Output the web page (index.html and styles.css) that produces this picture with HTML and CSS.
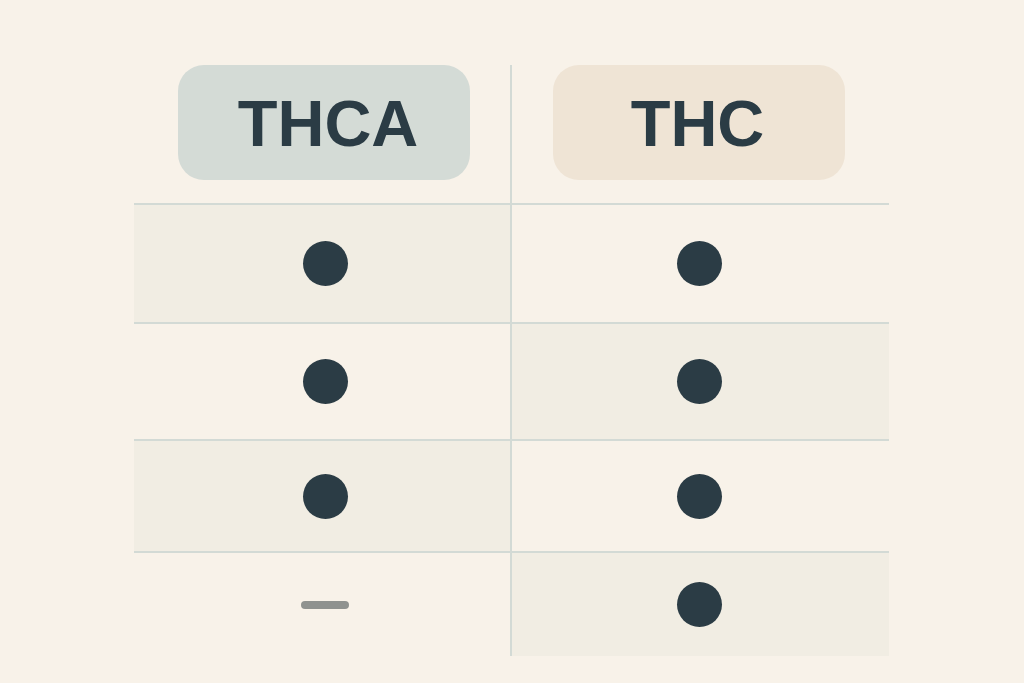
FILE: index.html
```html
<!DOCTYPE html>
<html lang="en">
<head>
<meta charset="utf-8">
<title>THCA vs THC</title>
<link rel="stylesheet" href="styles.css">
</head>
<body>
  <div class="table">
    <div class="row head">
      <div class="cell left"><span class="pill pill-thca">THCA</span></div>
      <div class="cell right"><span class="pill pill-thc">THC</span></div>
    </div>
    <div class="row r1">
      <div class="cell left shaded"><span class="dot"></span></div>
      <div class="cell right"><span class="dot"></span></div>
    </div>
    <div class="row r2">
      <div class="cell left"><span class="dot"></span></div>
      <div class="cell right shaded"><span class="dot"></span></div>
    </div>
    <div class="row r3">
      <div class="cell left shaded"><span class="dot"></span></div>
      <div class="cell right"><span class="dot"></span></div>
    </div>
    <div class="row r4">
      <div class="cell left"><span class="dash"></span></div>
      <div class="cell right shaded"><span class="dot"></span></div>
    </div>
  </div>
</body>
</html>
```

FILE: styles.css
```css
html, body {
  margin: 0;
  padding: 0;
  background: #f8f2e9;
  font-family: "Liberation Sans", Arial, sans-serif;
}

body {
  width: 1024px;
  height: 683px;
  overflow: hidden;
}

.table {
  margin: 65px 0 0 134px;
  width: 755px;
  display: flex;
  flex-direction: column;
}

.row {
  display: flex;
}

.row + .row {
  border-top: 2px solid #d3dad5;
}

.cell {
  display: flex;
  align-items: center;
  justify-content: center;
  box-sizing: border-box;
}

.cell.left {
  width: 378px;
  padding-left: 6px;
  border-right: 2px solid #d3dad5;
}

.cell.right {
  width: 377px;
  padding-right: 3px;
}

.shaded {
  background: #f1ede3;
}

.head .cell {
  height: 138px;
  align-items: flex-start;
}

.r1 .cell { height: 117px; }
.r2 .cell { height: 115px; }
.r3 .cell { height: 110px; }
.r4 .cell { height: 103px; }

.pill {
  width: 292px;
  height: 115px;
  border-radius: 26px;
  display: flex;
  align-items: center;
  justify-content: center;
  font-weight: 700;
  font-size: 65px;
  line-height: 1;
  color: #2b3c45;
  padding-top: 2px;
  box-sizing: border-box;
  flex-shrink: 0;
}

.pill-thca {
  background: #d4dbd6;
  margin-left: -2px;
  padding-left: 8px;
}

.pill-thc {
  background: #efe4d5;
  padding-right: 3px;
}

.dot {
  width: 45px;
  height: 45px;
  border-radius: 50%;
  background: #2b3c45;
}

.dash {
  width: 48px;
  height: 8px;
  border-radius: 4px;
  background: #8f928f;
}
```
